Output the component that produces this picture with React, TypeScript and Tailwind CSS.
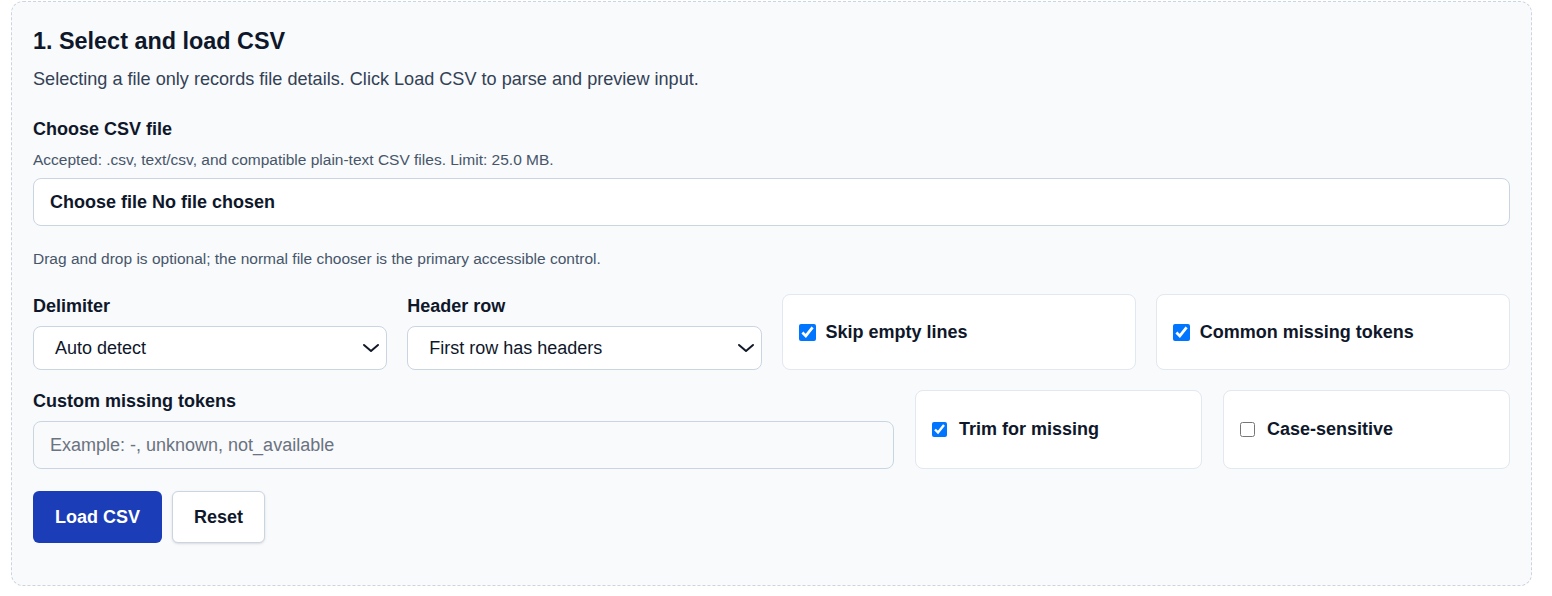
import React from "react";

function Chevron() {
  return (
    <svg width="20" height="20" viewBox="0 0 20 20" fill="none" className="absolute right-[5px] top-1/2 -translate-y-1/2 pointer-events-none">
      <path d="M3 7l7 6 7-6" stroke="#111827" strokeWidth="2" strokeLinecap="round" strokeLinejoin="round" />
    </svg>
  );
}

function SelectBox({ label, value }: { label: string; value: string }) {
  return (
    <div className="flex flex-col">
      <label className="text-[18px] font-bold text-[#0f172a] leading-[22px] mb-[9px] mt-px">{label}</label>
      <div className="relative h-[44px] rounded-lg border border-[#cbd5e1] bg-white flex items-center pl-[21px] text-[18px] text-[#0f172a]">
        {value}
        <Chevron />
      </div>
    </div>
  );
}

function CheckCard({ label, checked, small }: { label: string; checked: boolean; small?: boolean }) {
  return (
    <div className={`rounded-lg border border-[#e2e8f0] bg-white flex items-center ${small ? "pl-4 gap-3" : "pl-4 gap-[10px]"}`}>
      <input
        type="checkbox"
        defaultChecked={checked}
        className={`${small ? "w-[15px] h-[15px]" : "w-[17px] h-[17px]"} m-0 accent-[#0075ff]`}
      />
      <span className="text-[18px] font-bold text-[#0f172a]">{label}</span>
    </div>
  );
}

export default function App() {
  return (
    <div className="min-h-[596px] bg-white pt-px" style={{ fontFamily: '"Liberation Sans", Arial, sans-serif' }}>
      <div className="ml-[11px] w-[1521px] rounded-xl border border-dashed border-[#cbd5e1] bg-[#f8fafc] px-[21px] pt-[21px] pb-[42px]">
        <h2 className="text-[23.4px] font-bold leading-[36px] text-[#0f172a]">1. Select and load CSV</h2>
        <p className="mt-[2px] text-[18.1px] leading-[36px] text-[#334155]">
          Selecting a file only records file details. Click Load CSV to parse and preview input.
        </p>
        <div className="mt-[18px] text-[18px] font-bold leading-[28px] text-[#0f172a]">Choose CSV file</div>
        <div className="mt-[7px] text-[15.5px] leading-[20px] text-[#475569]">
          Accepted: .csv, text/csv, and compatible plain-text CSV files. Limit: 25.0 MB.
        </div>
        <div className="mt-[8px] h-[48px] rounded-lg border border-[#cbd5e1] bg-white flex items-center pl-4 text-[18px] font-bold text-[#0f172a]">
          Choose file No file chosen
        </div>
        <div className="mt-[23px] text-[15.5px] leading-[20px] text-[#475569]">
          Drag and drop is optional; the normal file chooser is the primary accessible control.
        </div>
        <div className="mt-[25px] grid grid-cols-4 gap-5">
          <SelectBox label="Delimiter" value="Auto detect" />
          <SelectBox label="Header row" value="First row has headers" />
          <CheckCard label="Skip empty lines" checked />
          <CheckCard label="Common missing tokens" checked />
        </div>
        <div className="mt-[20px] grid grid-cols-[3fr_1fr_1fr] gap-x-[21px]">
          <div className="flex flex-col">
            <label className="text-[18px] font-bold text-[#0f172a] leading-[22px] mb-[9px]">Custom missing tokens</label>
            <div className="h-[48px] rounded-lg border border-[#cbd5e1] bg-[#f8fafc] flex items-center pl-4 text-[18px] text-[#6b7280]">
              Example: -, unknown, not_available
            </div>
          </div>
          <CheckCard label="Trim for missing" checked small />
          <CheckCard label="Case-sensitive" checked={false} small />
        </div>
        <div className="mt-[22px] flex gap-[10px]">
          <button className="h-[52px] w-[129px] rounded-md bg-[#1b3db8] text-[18px] font-bold text-white">Load CSV</button>
          <button className="h-[52px] w-[93px] rounded-md border border-[#cbd5e1] bg-white text-[18px] font-bold text-[#0f172a] shadow-sm">Reset</button>
        </div>
      </div>
    </div>
  );
}
